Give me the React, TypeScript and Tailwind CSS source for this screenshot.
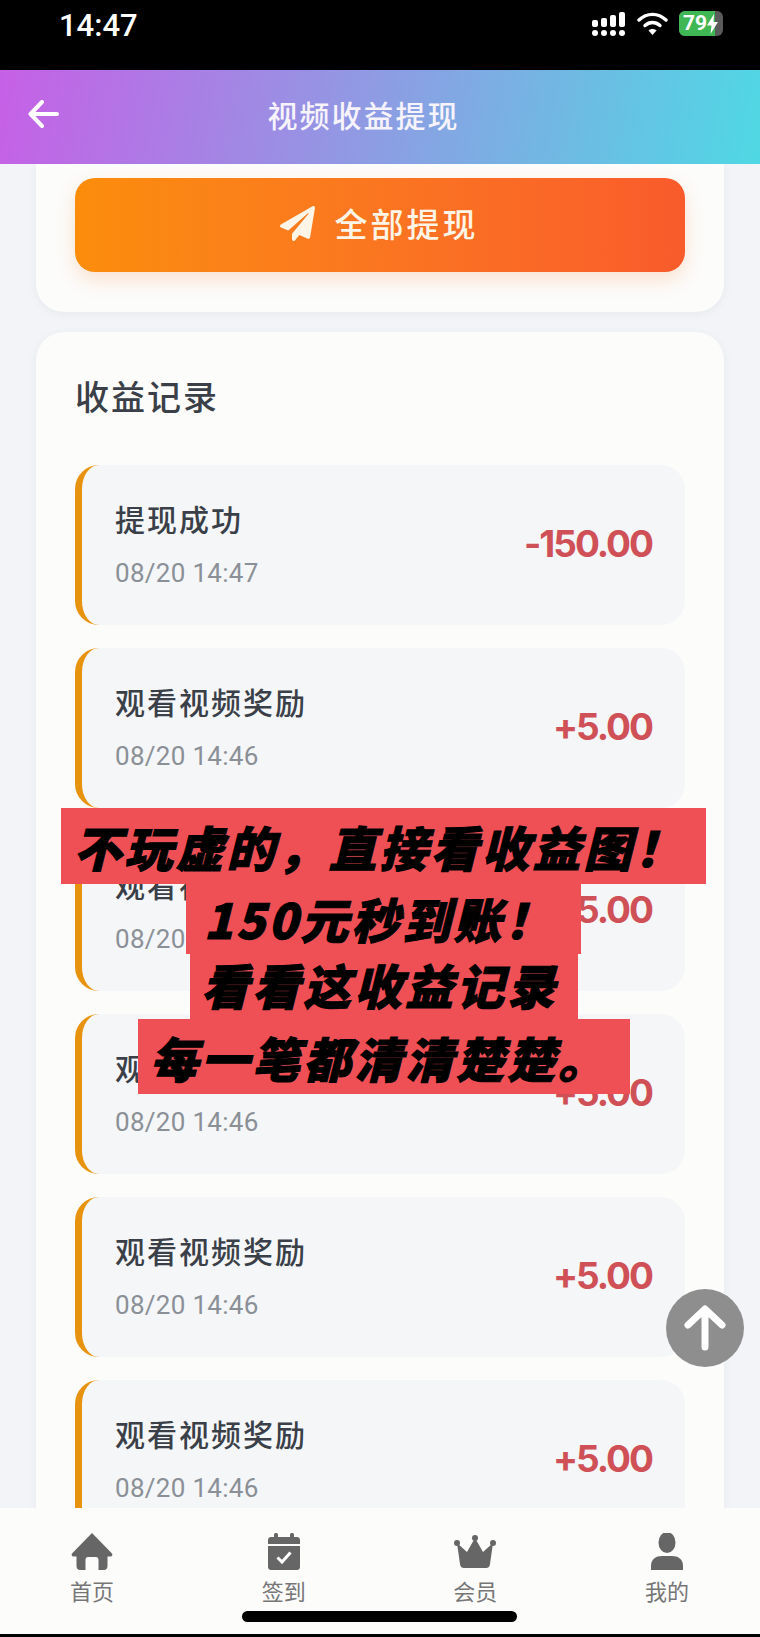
import React from 'react';
import { FaPaperPlane } from 'react-icons/fa';

const cjk = '"Noto Sans CJK SC", "Noto Sans", sans-serif';

const records = [
    { title: '提现成功', time: '08/20 14:47', amount: '-150.00' },
    { title: '观看视频奖励', time: '08/20 14:46', amount: '+5.00' },
    { title: '观看视频奖励', time: '08/20 14:46', amount: '+5.00' },
    { title: '观看视频奖励', time: '08/20 14:46', amount: '+5.00' },
    { title: '观看视频奖励', time: '08/20 14:46', amount: '+5.00' },
    { title: '观看视频奖励', time: '08/20 14:46', amount: '+5.00' }
];

const bannerLines = [
    { text: '不玩虚的，直接看收益图！', className: 'w-[645px] h-[76px]' },
    { text: '150元秒到账！', className: 'w-[395px] h-[70px] pb-[3px]' },
    { text: '看看这收益记录', className: 'w-[388px] h-[65px] pb-[5px]' },
    { text: '每一笔都清清楚楚。', className: 'w-[492px] h-[75px]' }
];

const StatusIcons = () => (
    <div className="flex items-center">
        <svg width="35" height="24" viewBox="0 0 35 24" fill="#fff">
            <rect x="1" y="8" width="6" height="7" rx="2" />
            <rect x="10" y="6" width="6" height="9" rx="2" />
            <rect x="19" y="3" width="6" height="12" rx="2" />
            <rect x="28" y="0" width="6" height="15" rx="2" />
            <circle cx="4" cy="21" r="3" />
            <circle cx="13" cy="21" r="3" />
            <circle cx="22" cy="21" r="3" />
            <circle cx="31" cy="21" r="3" />
        </svg>
        <svg className="ml-[11px]" width="31" height="24" viewBox="0 0 31 24" fill="none" stroke="#fff" strokeWidth="3.4" strokeLinecap="round">
            <path d="M2 8C10 0.5 21 0.5 29 8" />
            <path d="M8 13.5C12.500 9.500 18.500 9.500 23 13.500" />
            <path d="M15.500 23L11.500 18.500C13.500 16.500 17.500 16.500 19.500 18.500Z" fill="#fff" stroke="none" />
        </svg>
        <div className="ml-[11px] flex h-[25px] w-[44px] items-center overflow-hidden rounded-[6px] bg-[#5a5a5a]">
            <div className="flex h-full w-[36px] items-center bg-[#3fb755] pl-[4px] text-[21px] leading-none font-bold text-white" style={{ fontFamily: '"Roboto", sans-serif' }}>
                79
            </div>
            <svg className="ml-[-8px]" width="11" height="20" viewBox="0 0 11 20" fill="#fff">
                <path d="M7 0L0 11.500H4.500L3.500 20L11 8H6.500Z" />
            </svg>
        </div>
    </div>
);

const HomeIcon = () => (
    <svg width="42" height="37" viewBox="0 0 42 37" fill="#666">
        <path d="M21 0L41 20.500C42 22 41 23.500 39.500 23.500H36.500V33C36.500 35.500 35 37 33 37H27.500V27C27.500 25 26.500 24 25 24H17C15.500 24 14.500 25 14.500 27V37H9C7 37 5.500 35.500 5.500 33V23.500H2.500C1 23.500 0 22 1 20.500Z" />
    </svg>
);

const CalendarIcon = () => (
    <svg width="32" height="37" viewBox="0 0 32 37" fill="#666">
        <rect x="6" y="0" width="4" height="7" rx="1.500" />
        <rect x="22" y="0" width="4" height="7" rx="1.500" />
        <path d="M0 7C0 5 1.500 4 3 4H29C30.500 4 32 5 32 7V11H0Z" />
        <path d="M0 13H32V34C32 36 30.500 37 29 37H3C1.500 37 0 36 0 34Z" />
        <path d="M9.500 24.500L14 29L22.500 19.500" fill="none" stroke="#fff" strokeWidth="3" />
    </svg>
);

const CrownIcon = () => (
    <svg width="42" height="33" viewBox="0 0 42 33" fill="#666">
        <circle cx="21" cy="3" r="3" />
        <circle cx="3" cy="8" r="3" />
        <circle cx="39" cy="8" r="3" />
        <path d="M21 3L29 17L39 8L36 29C35.700 31.500 34.500 33 32 33H10C7.500 33 6.300 31.500 6 29L3 8L13 17Z" />
    </svg>
);

const UserIcon = () => (
    <svg width="32" height="37" viewBox="0 0 32 37" fill="#666">
        <ellipse cx="16" cy="9.500" rx="8.500" ry="10.500" />
        <path d="M0 37V33C0 26 5 23 11 23H21C27 23 32 26 32 33V37Z" />
    </svg>
);

const tabs = [
    { label: '首页', icon: <HomeIcon /> },
    { label: '签到', icon: <CalendarIcon /> },
    { label: '会员', icon: <CrownIcon /> },
    { label: '我的', icon: <UserIcon /> }
];

const RecordRow = ({ title, time, amount }: { title: string; time: string; amount: string }) => (
    <div className="flex h-[160px] shrink-0 items-center justify-between rounded-[24px] border-l-[7px] border-[#e8930f] bg-[#f4f6f8] px-[33px]">
        <div className="pb-[3px]">
            <div className="text-[30px] leading-[40px] font-medium tracking-[2px] text-[#3a3f48]">{title}</div>
            <div className="mt-[19px] text-[26px] leading-[32px] tracking-[0.3px] text-[#8b9097]" style={{ fontFamily: '"Roboto", sans-serif' }}>
                {time}
            </div>
        </div>
        <div className="mb-[3px] text-[37px] leading-none font-bold tracking-[-2px] text-[#cf5056]" style={{ fontFamily: '"Inter", sans-serif' }}>
            {amount}
        </div>
    </div>
);

const App = () => {
    return (
        <div className="relative flex h-[1637px] w-[760px] flex-col overflow-hidden bg-black" style={{ fontFamily: cjk }}>
            <div className="flex h-[70px] shrink-0 items-start justify-between bg-black pt-[11px] pr-[37px] pl-[59px]">
                <span className="text-[31px] leading-[30px] font-medium text-white" style={{ fontFamily: '"Roboto", sans-serif' }}>
                    14:47
                </span>
                <StatusIcons />
            </div>

            <div className="flex h-[94px] shrink-0 items-center bg-[linear-gradient(100deg,#c660e6_0%,#8d9de3_50%,#4fd8e4_100%)] pb-[6px] pl-[28px]">
                <svg width="31" height="28" viewBox="0 0 31 28" fill="none" stroke="#fff" strokeWidth="4" strokeLinecap="round" strokeLinejoin="round">
                    <path d="M29 14H3M14 2L2.500 14L14 26" />
                </svg>
                <div className="flex-1 pr-[92px] text-center text-[30px] font-medium tracking-[2px] text-[#f6f3fb]">视频收益提现</div>
            </div>

            <div className="flex min-h-0 flex-1 flex-col gap-[20px] overflow-hidden bg-[#f2f4f7] px-[36px]">
                <div className="h-[148px] shrink-0 rounded-b-[28px] bg-[#fcfcfb] px-[39px] pt-[14px] shadow-[0_2px_10px_rgba(30,50,80,0.05)]">
                    <div className="flex h-[94px] items-center justify-center gap-[20px] rounded-[20px] bg-gradient-to-r from-[#fb8d0a] to-[#f95b2b] pr-[2px] pb-[3px] shadow-[0_8px_20px_rgba(249,120,30,0.2)]">
                        <FaPaperPlane size={35} color="#fff5e6" />
                        <span className="text-[33px] font-medium tracking-[3px] text-[#fff5e6]">全部提现</span>
                    </div>
                </div>

                <div className="shrink-0 rounded-[28px] bg-[#fcfcfb] px-[39px] pt-[40px] shadow-[0_2px_10px_rgba(30,50,80,0.05)]">
                    <div className="mb-[45px] text-[34px] leading-[48px] font-medium tracking-[2px] text-[#3a3f48]">收益记录</div>
                    <div className="flex flex-col gap-[23px]">
                        {records.map((record, i) => (
                            <RecordRow key={i} {...record} />
                        ))}
                    </div>
                </div>
            </div>

            <div className="relative flex h-[129px] shrink-0 items-start justify-between border-b-[3px] border-black bg-[#fcfcfb] pt-[25px] pr-[53px] pl-[52px]">
                {tabs.map(tab => (
                    <div key={tab.label} className="flex w-[80px] flex-col items-center">
                        <div className="flex h-[37px] items-center">{tab.icon}</div>
                        <div className="mt-[7px] text-[22px] leading-[26px] text-[#767676]">{tab.label}</div>
                    </div>
                ))}
                <div className="absolute top-[103px] left-[242px] h-[11px] w-[275px] rounded-full bg-black" />
            </div>

            {/* caption pasted over the screenshot */}
            <div className="absolute top-[808px] left-[61px] flex w-[645px] flex-col items-center">
                {bannerLines.map(line => (
                    <div key={line.text} className={`flex items-center justify-center bg-[#ef5056] pr-[8px] text-[48px] leading-none font-black tracking-[3px] whitespace-nowrap text-black italic [-webkit-text-stroke:1px_#000] ${line.className}`}>
                        {line.text}
                    </div>
                ))}
            </div>

            <div className="absolute top-[1289px] left-[666px] flex h-[78px] w-[78px] items-center justify-center rounded-full bg-[#8e8e8e]">
                <svg width="42" height="46" viewBox="0 0 42 46" fill="none" stroke="#fff" strokeWidth="7" strokeLinecap="round" strokeLinejoin="round">
                    <path d="M21 42V5M4 20L21 4L38 20" />
                </svg>
            </div>
        </div>
    );
};

export default App;
